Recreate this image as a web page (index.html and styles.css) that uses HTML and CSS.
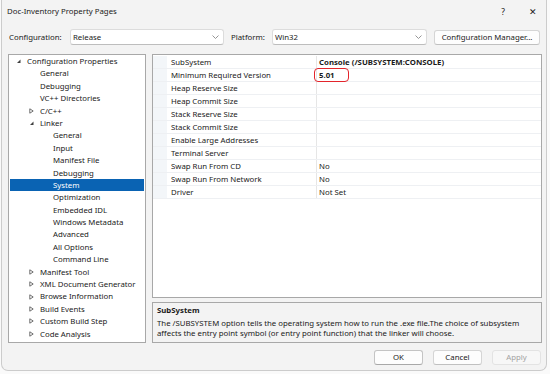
FILE: index.html
```html
<!DOCTYPE html>
<html lang="en">
<head>
    <meta charset="UTF-8">
    <title>Doc-Inventory Property Pages</title>
    <link rel="stylesheet" href="styles.css">
</head>
<body>
    <div class="window">
        <div class="titlebar">
            <span class="title">Doc-Inventory Property Pages</span>
            <span class="help">?</span>
            <span class="close">&#x2715;</span>
        </div>

        <div class="config-row">
            <span class="label label-config">Configuration:</span>
            <div class="combo combo-config">
                <span>Release</span>
                <svg class="chevron" width="7" height="4" viewBox="0 0 7 4"><path d="M0.5 0.5 L3.5 3.5 L6.5 0.5" fill="none" stroke="#8a8a8a" stroke-width="0.9"/></svg>
            </div>
            <span class="label label-platform">Platform:</span>
            <div class="combo combo-platform">
                <span>Win32</span>
                <svg class="chevron" width="7" height="4" viewBox="0 0 7 4"><path d="M0.5 0.5 L3.5 3.5 L6.5 0.5" fill="none" stroke="#8a8a8a" stroke-width="0.9"/></svg>
            </div>
            <button class="btn btn-manager">Configuration Manager...</button>
        </div>

        <div class="main">
            <div class="tree">
                <div class="node lvl0"><svg class="arrow" width="11" height="12" viewBox="0 0 11 12"><polygon points="1,8 4.5,4.5 4.5,8" fill="#404040"/></svg>Configuration Properties</div>
                <div class="node lvl1"><span class="arrow"></span>General</div>
                <div class="node lvl1"><span class="arrow"></span>Debugging</div>
                <div class="node lvl1"><span class="arrow"></span>VC++ Directories</div>
                <div class="node lvl1"><svg class="arrow" width="11" height="12" viewBox="0 0 11 12"><polygon points="0.8,3.8 0.8,8.2 4.2,6" fill="none" stroke="#606060" stroke-width="0.9"/></svg>C/C++</div>
                <div class="node lvl1"><svg class="arrow" width="11" height="12" viewBox="0 0 11 12"><polygon points="1,8 4.5,4.5 4.5,8" fill="#404040"/></svg>Linker</div>
                <div class="node lvl2"><span class="arrow"></span>General</div>
                <div class="node lvl2"><span class="arrow"></span>Input</div>
                <div class="node lvl2"><span class="arrow"></span>Manifest File</div>
                <div class="node lvl2"><span class="arrow"></span>Debugging</div>
                <div class="node lvl2 selected"><span class="arrow"></span>System</div>
                <div class="node lvl2"><span class="arrow"></span>Optimization</div>
                <div class="node lvl2"><span class="arrow"></span>Embedded IDL</div>
                <div class="node lvl2"><span class="arrow"></span>Windows Metadata</div>
                <div class="node lvl2"><span class="arrow"></span>Advanced</div>
                <div class="node lvl2"><span class="arrow"></span>All Options</div>
                <div class="node lvl2"><span class="arrow"></span>Command Line</div>
                <div class="node lvl1"><svg class="arrow" width="11" height="12" viewBox="0 0 11 12"><polygon points="0.8,3.8 0.8,8.2 4.2,6" fill="none" stroke="#606060" stroke-width="0.9"/></svg>Manifest Tool</div>
                <div class="node lvl1"><svg class="arrow" width="11" height="12" viewBox="0 0 11 12"><polygon points="0.8,3.8 0.8,8.2 4.2,6" fill="none" stroke="#606060" stroke-width="0.9"/></svg>XML Document Generator</div>
                <div class="node lvl1"><svg class="arrow" width="11" height="12" viewBox="0 0 11 12"><polygon points="0.8,3.8 0.8,8.2 4.2,6" fill="none" stroke="#606060" stroke-width="0.9"/></svg>Browse Information</div>
                <div class="node lvl1"><svg class="arrow" width="11" height="12" viewBox="0 0 11 12"><polygon points="0.8,3.8 0.8,8.2 4.2,6" fill="none" stroke="#606060" stroke-width="0.9"/></svg>Build Events</div>
                <div class="node lvl1"><svg class="arrow" width="11" height="12" viewBox="0 0 11 12"><polygon points="0.8,3.8 0.8,8.2 4.2,6" fill="none" stroke="#606060" stroke-width="0.9"/></svg>Custom Build Step</div>
                <div class="node lvl1"><svg class="arrow" width="11" height="12" viewBox="0 0 11 12"><polygon points="0.8,3.8 0.8,8.2 4.2,6" fill="none" stroke="#606060" stroke-width="0.9"/></svg>Code Analysis</div>
            </div>

            <div class="right">
                <div class="grid">
                    <div class="prop"><span class="gutter"></span><span class="name">SubSystem</span><span class="val bold">Console (/SUBSYSTEM:CONSOLE)</span></div>
                    <div class="prop"><span class="gutter"></span><span class="name">Minimum Required Version</span><span class="val bold">5.01<span class="mark"></span></span></div>
                    <div class="prop"><span class="gutter"></span><span class="name">Heap Reserve Size</span><span class="val"></span></div>
                    <div class="prop"><span class="gutter"></span><span class="name">Heap Commit Size</span><span class="val"></span></div>
                    <div class="prop"><span class="gutter"></span><span class="name">Stack Reserve Size</span><span class="val"></span></div>
                    <div class="prop"><span class="gutter"></span><span class="name">Stack Commit Size</span><span class="val"></span></div>
                    <div class="prop"><span class="gutter"></span><span class="name">Enable Large Addresses</span><span class="val"></span></div>
                    <div class="prop"><span class="gutter"></span><span class="name">Terminal Server</span><span class="val"></span></div>
                    <div class="prop"><span class="gutter"></span><span class="name">Swap Run From CD</span><span class="val">No</span></div>
                    <div class="prop"><span class="gutter"></span><span class="name">Swap Run From Network</span><span class="val">No</span></div>
                    <div class="prop"><span class="gutter"></span><span class="name">Driver</span><span class="val">Not Set</span></div>
                </div>
                <div class="desc">
                    <div class="desc-title">SubSystem</div>
                    <div class="desc-text">The /SUBSYSTEM option tells the operating system how to run the .exe file.The choice of subsystem affects the entry point symbol (or entry point function) that the linker will choose.</div>
                </div>
            </div>
        </div>

        <div class="buttons">
            <button class="btn btn-ok">OK</button>
            <button class="btn">Cancel</button>
            <button class="btn btn-disabled">Apply</button>
        </div>
    </div>
</body>
</html>
```

FILE: styles.css
```css
body {
    margin: 0;
    background-color: #fafafa;
    font-family: "Noto Sans", "Open Sans", sans-serif;
    font-size: 7.8px;
    color: #1a1a1a;
}
.window {
    margin-left: 1px;
    width: 546px;
    height: 371px;
    box-sizing: border-box;
    background-color: #f3f3f3;
    border: 1px solid #cccccc;
    border-top: none;
    border-radius: 0 0 7px 7px;
    display: flex;
    flex-direction: column;
}
.titlebar {
    height: 22px;
    display: flex;
    align-items: center;
    padding-left: 5px;
}
.title {
    flex: 1;
}
.help {
    width: 10px;
    text-align: center;
    margin-right: 20px;
    font-size: 8.5px;
}
.close {
    width: 10px;
    text-align: center;
    margin-right: 8px;
    font-size: 9px;
}
.config-row {
    margin-top: 7px;
    height: 16px;
    display: flex;
    align-items: center;
    padding-left: 7px;
}
.label-config {
    width: 61px;
}
.label-platform {
    margin-left: 7px;
    width: 41px;
}
.combo {
    height: 16px;
    box-sizing: border-box;
    background-color: #ffffff;
    border: 1px solid #dcdcdc;
    border-bottom-color: #bdbdbd;
    border-radius: 3px;
    display: flex;
    align-items: center;
    justify-content: space-between;
    padding: 0 4px 0 2px;
}
.combo-config {
    width: 154px;
}
.combo-platform {
    width: 155px;
}
.btn {
    font-family: inherit;
    font-size: 7.8px;
    color: #1a1a1a;
    height: 15px;
    box-sizing: border-box;
    background-color: #fdfdfd;
    border: 1px solid #d5d5d5;
    border-bottom-color: #c0c0c0;
    border-radius: 3px;
    padding: 0;
    line-height: 13px;
}
.btn-manager {
    margin-left: 7px;
    width: 106px;
    height: 15px;
}
.main {
    margin-top: 9px;
    height: 289px;
    display: flex;
    padding-left: 6px;
    gap: 6px;
}
.tree {
    width: 138px;
    box-sizing: border-box;
    background-color: #ffffff;
    border: 1px solid #a8a8a8;
    padding: 0 1px;
}
.node {
    height: 12.4px;
    line-height: 12.4px;
    display: flex;
    align-items: center;
    white-space: nowrap;
}
.arrow {
    display: inline-block;
    width: 11px;
    height: 12px;
    flex-shrink: 0;
}
.lvl0 {
    padding-left: 6px;
}
.lvl1 {
    padding-left: 19px;
}
.lvl2 {
    padding-left: 32px;
}
.selected {
    background-color: #0a63b3;
    color: #ffffff;
}
.right {
    width: 390px;
    display: flex;
    flex-direction: column;
    gap: 4px;
}
.grid {
    height: 244px;
    box-sizing: border-box;
    background-color: #ffffff;
    border: 1px solid #a8a8a8;
    padding-top: 1px;
}
.prop {
    height: 13px;
    box-sizing: border-box;
    display: grid;
    grid-template-columns: 14px 149px 1fr;
    border-bottom: 1px solid #eef0f3;
    line-height: 12px;
}
.gutter {
    background-color: #f3f6f9;
}
.name {
    padding-left: 4px;
    white-space: nowrap;
}
.val {
    position: relative;
    border-left: 1px solid #e6e6e6;
    padding-left: 2px;
    white-space: nowrap;
}
.bold {
    font-weight: bold;
}
.mark {
    position: absolute;
    left: -3px;
    top: -1px;
    width: 35px;
    height: 14px;
    box-sizing: border-box;
    border: 1.5px solid #e3242b;
    border-radius: 4px;
}
.desc {
    height: 41px;
    box-sizing: border-box;
    border: 1px solid #a8a8a8;
    padding: 1px 4px 0 4px;
}
.desc-title {
    font-weight: bold;
    line-height: 12px;
    margin-bottom: 2px;
}
.desc-text {
    line-height: 10px;
}
.buttons {
    margin-top: 7px;
    display: flex;
    justify-content: flex-end;
    gap: 10px;
    padding-right: 5px;
}
.buttons .btn {
    width: 49px;
}
.btn-ok {
    border-color: #c4c4c4;
    border-bottom-color: #a8a8a8;
}
.btn-disabled {
    color: #a3a3a3;
    background-color: #f7f7f7;
    border-color: #e3e3e3;
}
```
